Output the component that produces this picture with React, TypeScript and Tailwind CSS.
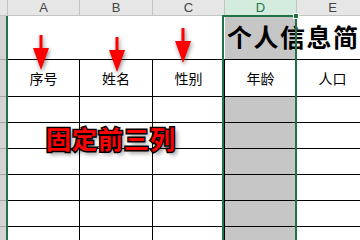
import React from 'react';

const cols = [
  { key: 'A', w: 'w-[72px]' },
  { key: 'B', w: 'w-[73px]' },
  { key: 'C', w: 'w-[72px]' },
  { key: 'D', w: 'w-[72px]' },
  { key: 'E', w: 'w-[72px]' },
];

const labels = ['序号', '姓名', '性别', '年龄', '人口'];

// Red pointer arrow with a soft shadow
const Arrow = ({ className }: { className: string }) => (
  <svg
    className={`absolute drop-shadow-[1px_2px_2px_rgba(0,0,0,0.45)] ${className}`}
    width="18"
    height="36"
    viewBox="0 0 18 36"
  >
    <rect x="7.5" y="0" width="3" height="14" fill="#ff0000" />
    <polygon points="1,13 17,13 9,35" fill="#ff0000" />
  </svg>
);

const App: React.FC = () => {
  return (
    <div className="relative w-[360px] h-[240px] overflow-hidden bg-white font-['Noto_Sans_CJK_SC',sans-serif]">
      {/* Column header */}
      <div className="flex h-[16px] bg-[#e6e6e6] border-b border-[#c4c4c4]">
        <div className="w-[8px] shrink-0 border-r border-[#c4c4c4]" />
        {cols.map((c) => (
          <div
            key={c.key}
            className={`${c.w} shrink-0 flex items-center justify-center border-r border-[#c4c4c4] text-[13px] leading-none font-['Liberation_Sans',sans-serif] ${
              c.key === 'D' ? 'bg-[#d3ecdd] text-[#217346]' : 'text-[#444]'
            }`}
          >
            {c.key}
          </div>
        ))}
      </div>

      <div className="flex">
        {/* Row header strip */}
        <div className="w-[6px] shrink-0 bg-[#d4d4d4] flex flex-col">
          <div className="h-[44px] border-b border-[#a8a8a8]" />
          <div className="h-[37px] border-b border-[#a8a8a8]" />
          {[0, 1, 2, 3, 4, 5].map((i) => (
            <div key={i} className="h-[26px] border-b border-[#a8a8a8]" />
          ))}
        </div>
        <div className="w-[2px] shrink-0 bg-[#217346]" />

        {/* Sheet cells */}
        <div className="flex flex-col">
          {/* Title row */}
          <div className="flex h-[44px] border-b border-black">
            <div className="w-[217px] shrink-0" />
            <div className="relative w-[72px] shrink-0 bg-[#c6c6c6]">
              <span className="absolute left-[2px] top-[5px] whitespace-nowrap text-[25px] font-bold leading-[30px] text-black tracking-[1.5px]">
                个人信息简
              </span>
            </div>
          </div>

          {/* Field names */}
          <div className="flex h-[37px] border-b border-black">
            {cols.map((c, i) => (
              <div
                key={c.key}
                className={`${c.w} shrink-0 flex items-center justify-center border-r border-black text-[14px] text-black`}
              >
                {labels[i]}
              </div>
            ))}
          </div>

          {/* Empty rows */}
          {[0, 1, 2, 3, 4, 5].map((r) => (
            <div key={r} className="flex h-[26px] border-b border-black">
              {cols.map((c) => (
                <div
                  key={c.key}
                  className={`${c.w} shrink-0 border-r border-black ${c.key === 'D' ? 'bg-[#c6c6c6]' : ''}`}
                />
              ))}
            </div>
          ))}
        </div>
      </div>

      {/* Selected column D outline */}
      <div className="absolute left-[222px] top-[15px] w-[75px] h-[230px] border-2 border-[#217346]" />
      <div className="absolute left-[293px] top-[13px] w-[6px] h-[6px] bg-[#217346] border border-white" />

      <Arrow className="left-[32px] top-[35px]" />
      <Arrow className="left-[108px] top-[37px]" />
      <Arrow className="left-[174px] top-[28px]" />

      <span className="absolute left-[46px] top-[122px] text-[25px] font-bold leading-[32px] text-[#ff0000] tracking-[1px] [-webkit-text-stroke:3px_#000] [paint-order:stroke_fill] [text-shadow:3px_3px_4px_rgba(0,0,0,0.5)]">
        固定前三列
      </span>
    </div>
  );
};

export default App;
